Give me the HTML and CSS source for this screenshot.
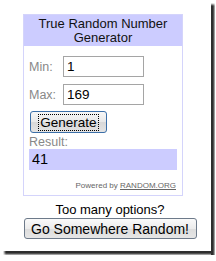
FILE: index.html
```html
<!DOCTYPE html>
<html lang="en">
<head>
    <meta charset="UTF-8">
    <meta name="viewport" content="width=device-width, initial-scale=1.0">
    <title>True Random Number Generator</title>
    <link rel="stylesheet" href="styles.css">
</head>
<body>
    <div class="shadow">
    <div class="frame">
        <div class="widget">
            <div class="widget-title">True Random Number Generator</div>
            <div class="widget-body">
                <div class="input-row">
                    <span class="input-label">Min:</span>
                    <input type="text" class="input-field" value="1">
                </div>
                <div class="input-row">
                    <span class="input-label">Max:</span>
                    <input type="text" class="input-field" value="169">
                </div>
                <button class="gen-btn"><span class="focus-ring">Generate</span></button>
                <div class="result-label">Result:</div>
                <div class="result-box">41</div>
                <div class="powered">Powered by <u>RANDOM.ORG</u></div>
            </div>
        </div>
        <div class="more">
            <div class="more-text">Too many options?</div>
            <button class="go-btn">Go Somewhere Random!</button>
        </div>
    </div>
    </div>
</body>
</html>
```

FILE: styles.css
```css
body {
    margin: 0;
    background: #ffffff;
    font-family: "Liberation Sans", Arial, sans-serif;
}
/* fake drop shadow round the picture: dark band right and bottom */
.shadow {
    width: 211px;
    padding: 0 4px 4px 0;
    background:
        linear-gradient(#fff 3px, rgba(255,255,255,0) 6px) right top / 4px 100% no-repeat,
        linear-gradient(to right, #fff 3px, rgba(255,255,255,0) 6px) left bottom / 100% 4px no-repeat,
        linear-gradient(to right, #2e2e2e 2px, #777 3px, #c8c8c8 4px) right top / 4px 100% no-repeat,
        linear-gradient(#2e2e2e 2px, #777 3px, #c8c8c8 4px) left bottom / 100% 4px no-repeat;
}
.frame {
    width: 211px;
    height: 251px;
    background: #ffffff;
    padding-top: 14px;
    box-sizing: border-box;
}
.widget {
    width: 160px;
    margin-left: 23px;
    border: 1px solid #d4d4fb;
    box-sizing: border-box;
}
.widget-title {
    background: #ccccff;
    text-align: center;
    font-size: 13px;
    line-height: 14px;
    padding: 2px 0 1px;
    color: #111;
}
.widget-body {
    padding: 10px 5px 4px 5px;
}
.input-row {
    display: flex;
    align-items: center;
    height: 21px;
    margin-bottom: 7px;
}
.input-label {
    width: 34px;
    font-size: 12.5px;
    color: #888;
}
.input-field {
    width: 81px;
    height: 21px;
    box-sizing: border-box;
    border: 1px solid #a5a5a5;
    padding: 0 3px;
    margin: 0;
    font-family: "Liberation Sans", Arial, sans-serif;
    font-size: 13.5px;
    color: #000;
}
.gen-btn {
    display: block;
    width: 77px;
    height: 22px;
    margin: -1px 0 0 1px;
    padding: 0;
    border: 1px solid #3c6fa8;
    border-radius: 3px;
    background: linear-gradient(#f7f7f7, #e8e8e8 50%, #d8d8d8 51%, #e4e4e4);
    font-family: "Liberation Sans", Arial, sans-serif;
    font-size: 13.5px;
    color: #000;
}
.focus-ring {
    border: 1px dotted #000;
    padding: 0 1px;
}
.result-label {
    font-size: 12.5px;
    line-height: 12px;
    color: #888;
    margin-top: 3px;
}
.result-box {
    background: #ccccff;
    height: 21px;
    line-height: 21px;
    margin-top: 1px;
    padding-left: 3px;
    font-size: 14.5px;
    color: #000;
}
.powered {
    text-align: right;
    font-size: 8px;
    line-height: 10px;
    color: #666;
    margin-top: 11px;
    padding-right: 1px;
}
.more {
    width: 174px;
    margin-left: 23px;
    text-align: center;
}
.more-text {
    font-size: 13px;
    line-height: 14px;
    margin-top: 7px;
    color: #000;
}
.go-btn {
    width: 173px;
    height: 21px;
    margin-top: 1px;
    padding: 0;
    border: 1px solid #6d7a8a;
    border-radius: 3px;
    background: linear-gradient(#fafafa, #ececec 50%, #dcdcdc 51%, #e6e6e6);
    font-family: "Liberation Sans", Arial, sans-serif;
    font-size: 14px;
    color: #000;
}
```
